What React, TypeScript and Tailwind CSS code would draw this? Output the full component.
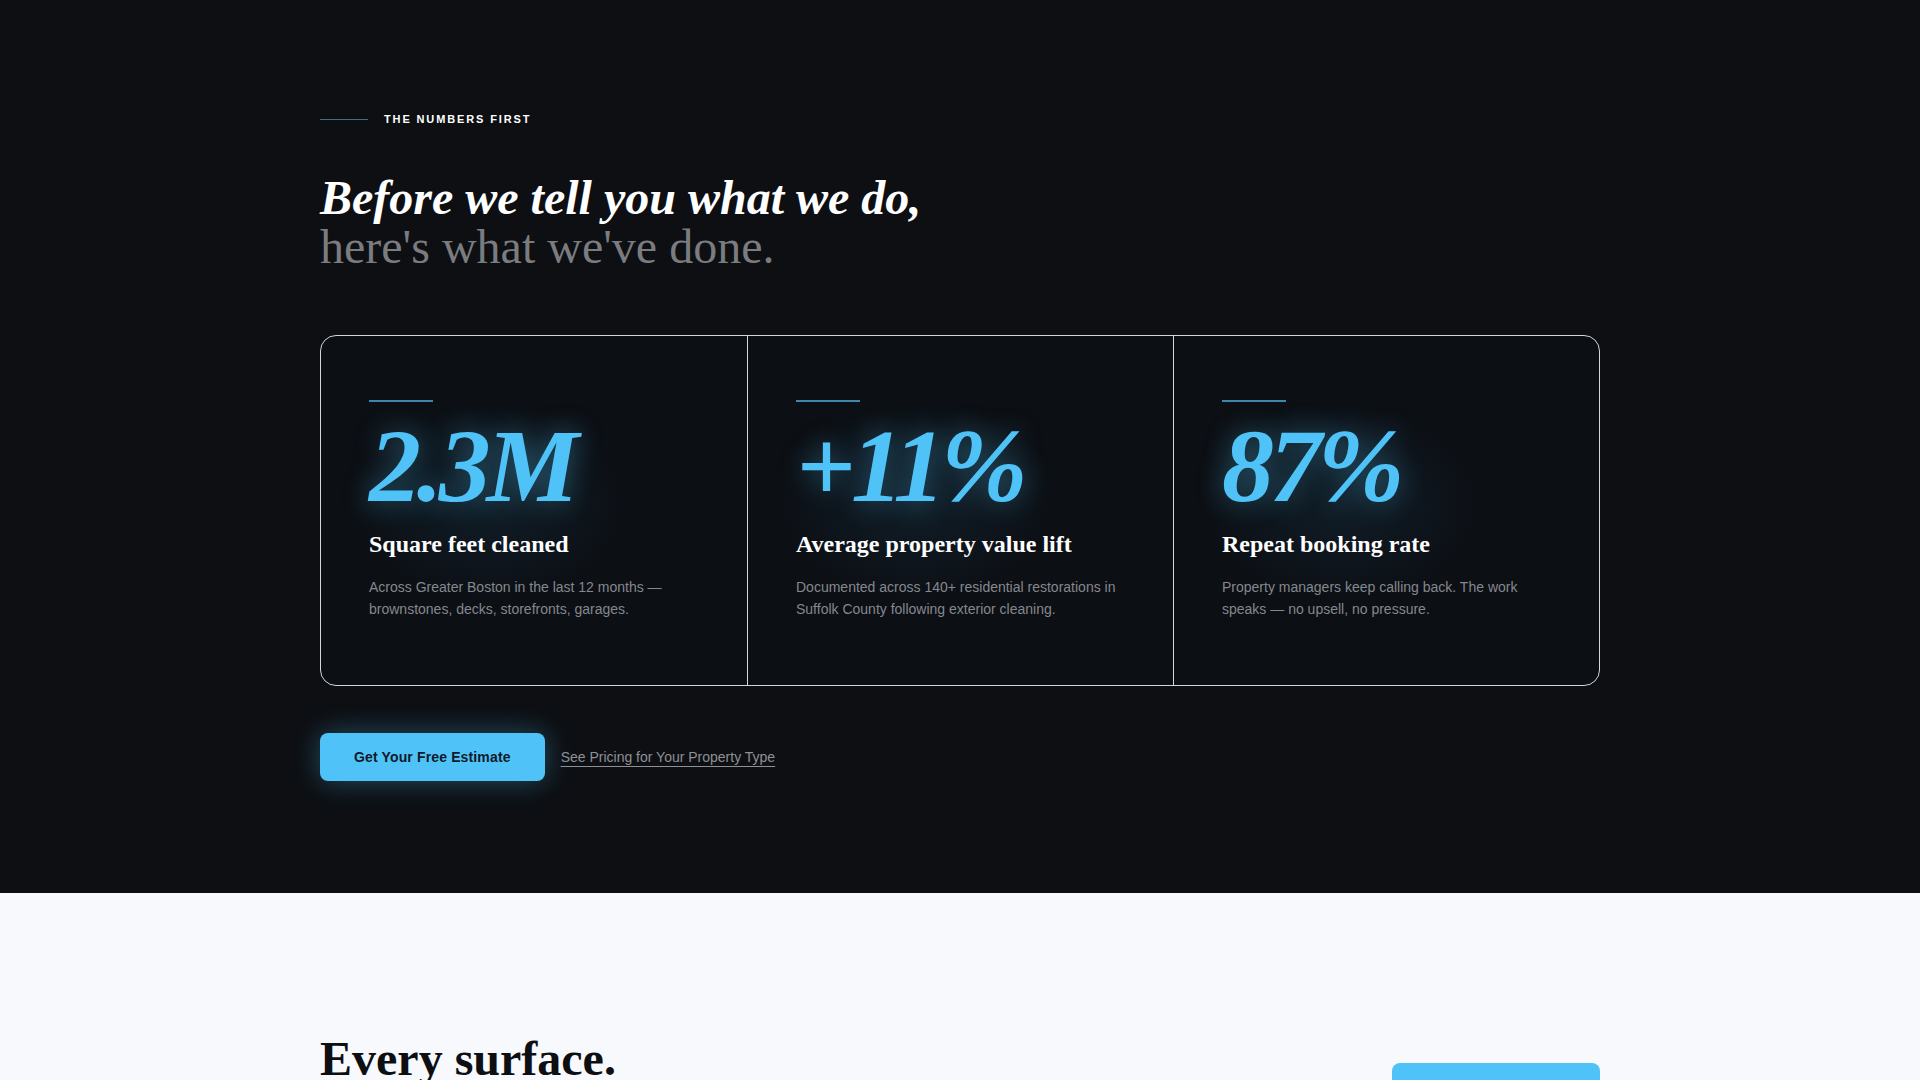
import React from "react";

type Stat = {
  value: string;
  label: string;
  body: string;
};

const stats: Stat[] = [
  {
    value: "2.3M",
    label: "Square feet cleaned",
    body: "Across Greater Boston in the last 12 months — brownstones, decks, storefronts, garages.",
  },
  {
    value: "+11%",
    label: "Average property value lift",
    body: "Documented across 140+ residential restorations in Suffolk County following exterior cleaning.",
  },
  {
    value: "87%",
    label: "Repeat booking rate",
    body: "Property managers keep calling back. The work speaks — no upsell, no pressure.",
  },
];

const serif = "font-['Liberation_Serif','Times_New_Roman',serif]";
const sans = "font-['Liberation_Sans',Arial,sans-serif]";

function StatCell({ stat, first }: { stat: Stat; first: boolean }) {
  return (
    <div
      className={`relative px-12 pt-16 pb-[65px] ${first ? "" : "border-l border-[#d4d6da]"}`}
    >
      <div className="pointer-events-none absolute left-6 top-16 h-52 w-72 rounded-full bg-[radial-gradient(closest-side,rgba(56,150,200,0.10),transparent)]" />
      <div className="relative">
        <div className="h-0.5 w-16 bg-[#3f86ad]" />
        <div
          className={`${serif} mt-3 text-[104px] font-bold italic leading-none tracking-[-0.04em] text-[#4fc3f7] [text-shadow:0_0_28px_rgba(79,195,247,0.45)]`}
        >
          {stat.value}
        </div>
        <h3 className={`${serif} mt-[11px] text-2xl font-bold leading-[1.25] text-white`}>
          {stat.label}
        </h3>
        <p className={`${sans} mt-[18px] text-sm leading-[1.55] text-[#85888e]`}>{stat.body}</p>
      </div>
    </div>
  );
}

export default function App() {
  return (
    <div className={`min-h-screen bg-[#f7f9fc] ${sans}`}>
      <section className="bg-[#0d0f13] pt-[111px] pb-[112px]">
        <div className="mx-auto max-w-7xl">
          <div className="flex items-center gap-4">
            <span className="h-px w-12 bg-[#3b6e8f]" />
            <span className="text-[11px] font-bold uppercase leading-4 tracking-[0.17em] text-white">
              The Numbers First
            </span>
          </div>

          <h2 className={`${serif} mt-[47px] text-[48px] leading-[1.02]`}>
            <span className="block font-bold italic text-white">
              Before we tell you what we do,
            </span>
            <span className="block font-normal text-[#7b7c7f]">here's what we've done.</span>
          </h2>

          <div className="mt-[63px] grid grid-cols-3 overflow-hidden rounded-2xl border border-[#d4d6da] bg-[#0c0f14]">
            {stats.map((s, i) => (
              <StatCell key={s.value} stat={s} first={i === 0} />
            ))}
          </div>

          <div className="mt-[47px] flex items-center gap-4">
            <button className="h-12 rounded-lg bg-[#4fc3f7] px-[34px] text-sm font-bold tracking-[0.01em] text-[#0f1a2a] shadow-[0_0_28px_rgba(79,195,247,0.35)]">
              Get Your Free Estimate
            </button>
            <a
              href="#pricing"
              className="text-sm text-[#8d9096] underline decoration-[#8d9096] underline-offset-4"
            >
              See Pricing for Your Property Type
            </a>
          </div>
        </div>
      </section>

      <section className="bg-[#f7f9fc] pt-[141px] pb-24">
        <div className="mx-auto flex max-w-7xl items-start justify-between">
          <h2 className={`${serif} text-[48px] font-bold leading-[1.05] text-[#0d0f13]`}>
            Every surface.
          </h2>
          <button className="mt-[29px] h-14 w-52 rounded-lg bg-[#4fc3f7] text-sm font-bold text-[#0f1a2a]">
            View All Services
          </button>
        </div>
      </section>
    </div>
  );
}
